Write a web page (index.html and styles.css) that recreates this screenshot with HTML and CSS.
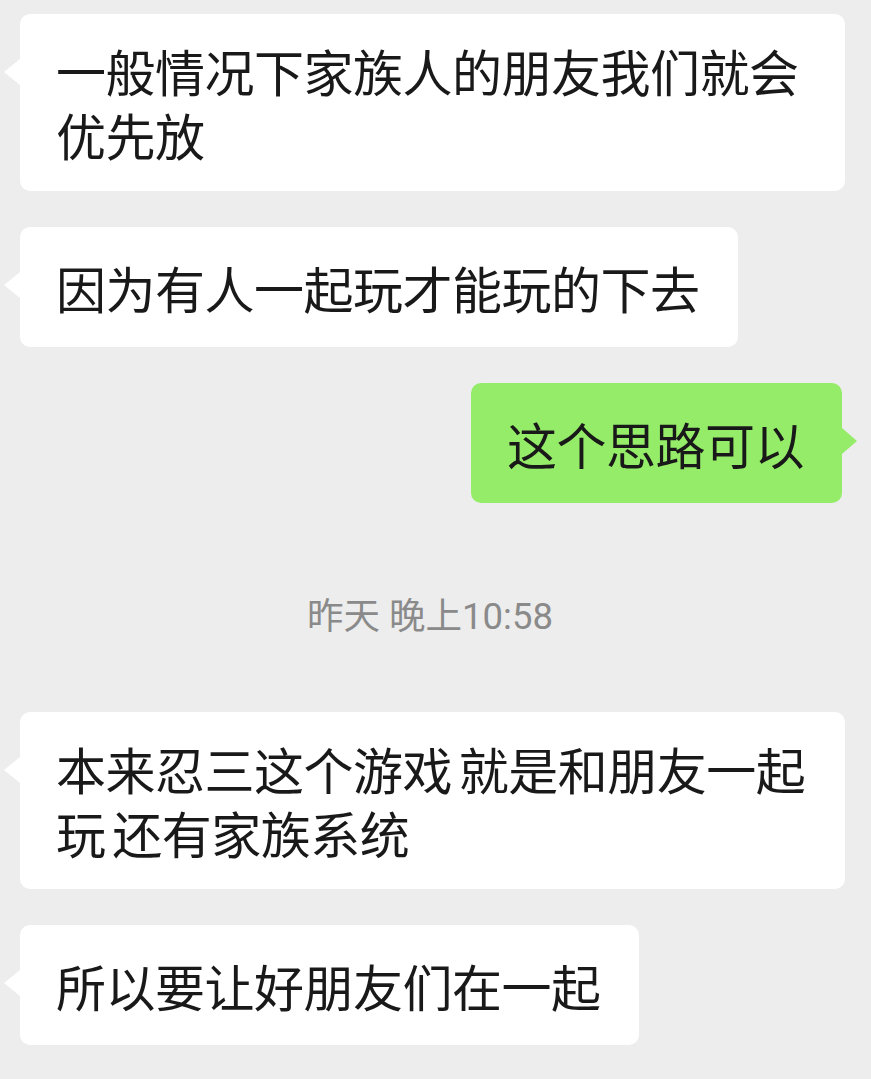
FILE: index.html
```html
<!DOCTYPE html>
<html lang="zh-CN">
<head>
    <meta charset="UTF-8">
    <meta name="viewport" content="width=device-width, initial-scale=1.0">
    <title>聊天</title>
    <link rel="stylesheet" href="styles.css">
</head>
<body>

    <div class="chat">
        <div class="bubble left">一般情况下家族人的朋友我们就会优先放</div>
        <div class="bubble left">因为有人一起玩才能玩的下去</div>
        <div class="bubble right">这个思路可以</div>

        <!-- Zeitstempel -->
        <div class="time">昨天 晚上10:58</div>

        <div class="bubble left">本来忍三这个游戏 就是和朋友一起玩 还有家族系统</div>
        <div class="bubble left">所以要让好朋友们在一起</div>
    </div>

</body>
</html>
```

FILE: styles.css
```css
body {
    background-color: #ededed;
    color: #191919;
    font-family: "Noto Sans CJK SC", "Noto Sans", sans-serif;
    margin: 0;
    padding: 0;
}

.chat {
    display: flex;
    flex-direction: column;
    gap: 36px;
    padding: 14px 20px 0 20px;
}

.bubble {
    position: relative;
    display: flex;
    align-items: center;
    box-sizing: border-box;
    max-width: 825px;
    min-height: 120px;
    padding: 24px 38px 25px 36px;
    border-radius: 10px;
    font-size: 50px;
    line-height: 64px;
    letter-spacing: -0.5px;
    word-spacing: -4px;
}

.bubble::before {
    content: "";
    position: absolute;
    top: 45px;
    width: 0;
    height: 0;
    border-top: 13px solid transparent;
    border-bottom: 13px solid transparent;
}

.left {
    align-self: flex-start;
    background-color: #ffffff;
}

.left::before {
    left: -16px;
    border-right: 16px solid #ffffff;
}

.right {
    align-self: flex-end;
    margin-right: 9px;
    background-color: #95ec69;
}

.right::before {
    right: -15px;
    border-left: 15px solid #95ec69;
}

.time {
    align-self: center;
    margin: 58px 11px 39px 0;
    color: #8a8a8a;
    font-family: Roboto, "Noto Sans CJK SC", sans-serif;
    font-size: 36.5px;
    line-height: 40px;
}
```
